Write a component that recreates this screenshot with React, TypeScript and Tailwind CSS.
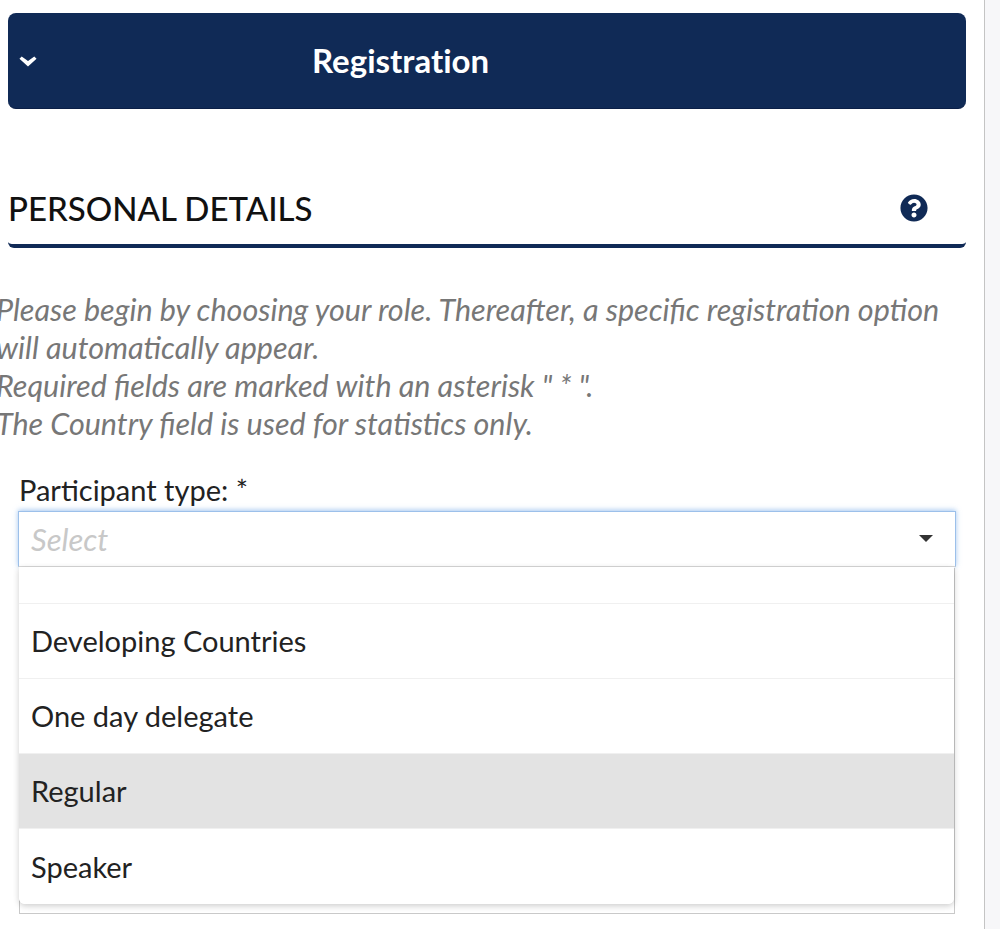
import { FaQuestionCircle } from "react-icons/fa"

const options = [
  { label: "Developing Countries", active: false },
  { label: "One day delegate", active: false },
  { label: "Regular", active: true },
  { label: "Speaker", active: false },
]

const App = () => {
  return (
    <div className="h-[929px] overflow-hidden bg-[#f7f7f9] font-['Lato','Noto_Sans',sans-serif]">
      <div className="h-full w-[985px] overflow-hidden border-r border-[#c4c4c4] bg-white pl-2 pr-[18px] pt-[13px]">
        {/* Accordion header */}
        <div className="flex h-[96px] items-center rounded-lg border-b border-[#0b1f47] bg-[#102a56] pl-[11px] text-white">
          <svg viewBox="0 0 20 12" className="mt-[2px] h-[11px] w-[18px] shrink-0" fill="currentColor">
            <path d="M0.5 3 L3 0.5 L10 5.5 L17 0.5 L19.5 3 L10 11.5 Z" />
          </svg>
          <h1 className="ml-[275px] text-[33px] font-bold leading-none [font-variant-ligatures:none]">Registration</h1>
        </div>

        {/* Section title */}
        <div className="mt-[70px] flex h-[69px] items-start justify-between rounded-b-md border-b-[4px] border-[#102a56] pr-[38px] pt-[10px]">
          <h2 className="text-[33px] font-medium leading-[38px] text-[#111]">PERSONAL DETAILS</h2>
          <FaQuestionCircle className="mt-[5px] h-[28px] w-[28px] text-[#102a56]" />
        </div>

        <p className="-ml-3 mt-[42px] w-[960px] text-[30.5px] italic leading-[38px] text-[#777]">
          Please begin by choosing your role. Thereafter, a specific registration option will automatically appear.
          <br />
          Required fields are marked with an asterisk " * ".
          <br />
          The Country field is used for statistics only.
        </p>

        <div className="ml-[10px] mr-[10px] mt-[26px]">
          <label className="block pl-px text-[29px] leading-[43px] text-[#222]">Participant type: *</label>
          <div className="relative">
            <div className="flex h-[56px] items-center justify-between border border-[#9cc0ea] border-b-[#d8d8d8] bg-white pl-[12px] pr-[22px] shadow-[0_-1px_5px_rgba(102,160,230,0.6)]">
              <span className="text-[31px] italic text-[#c8c8c8]">Select</span>
              <span className="mt-[-2px] h-0 w-0 border-x-[7px] border-t-[7px] border-x-transparent border-t-[#333]" />
            </div>

            {/* Field that sits behind the open menu */}
            <div className="mx-px mt-[1px] h-[346px] border border-[#c9c9c9] bg-white" />

            <div className="absolute left-[1px] right-[2px] top-[56px] z-10 rounded-b-md bg-white shadow-[0_2px_6px_rgba(0,0,0,0.2)]">
              <div className="h-[37px] border-b border-[#f0f0f0]" />
              {options.map((option) => (
                <div
                  key={option.label}
                  className={`flex h-[75px] items-center border-b border-[#f0f0f0] pl-[12px] text-[29px] text-[#222] last:rounded-b-md last:border-b-0 ${
                    option.active ? "bg-[#e3e3e3]" : "bg-white"
                  }`}
                >
                  {option.label}
                </div>
              ))}
            </div>
          </div>
        </div>
      </div>
    </div>
  )
}

export default App
